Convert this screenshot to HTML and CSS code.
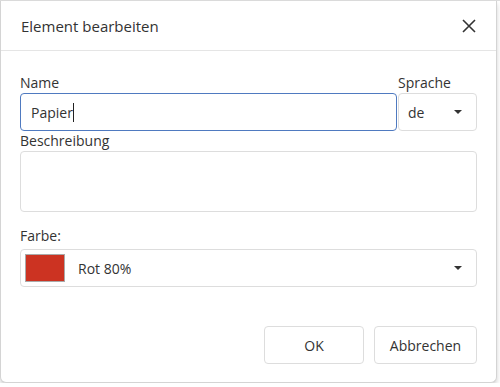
FILE: index.html
```html
<!DOCTYPE html>
<html lang="de">
<head>
<meta charset="utf-8">
<link rel="stylesheet" href="styles.css">
</head>
<body>
<div class="backdrop-line"></div>
<div class="dialog">
  <div class="dialog-header">
    <span class="dialog-title">Element bearbeiten</span>
    <svg class="close-icon" width="14" height="14" viewBox="0 0 14 14"><path d="M1 1 L13 13 M13 1 L1 13" stroke="#333" stroke-width="1.6" fill="none"/></svg>
  </div>
  <div class="dialog-body">
    <div class="name-row">
      <div class="field name-field">
        <div class="label">Name</div>
        <div class="control control-focus"><span>Papier</span><span class="caret"></span></div>
      </div>
      <div class="field lang-field">
        <div class="label">Sprache</div>
        <div class="control select"><span>de</span><span class="arrow"></span></div>
      </div>
    </div>
    <div class="field">
      <div class="label">Beschreibung</div>
      <div class="control textarea"></div>
    </div>
    <div class="field color-field">
      <div class="label">Farbe:</div>
      <div class="control select color-select">
        <span class="swatch"></span><span class="color-name">Rot 80%</span><span class="arrow"></span>
      </div>
    </div>
  </div>
  <div class="dialog-footer">
    <button class="btn btn-ok">OK</button>
    <button class="btn btn-cancel">Abbrechen</button>
  </div>
</div>
</body>
</html>
```
FILE: styles.css
```css
* { box-sizing: border-box; }
body {
  margin: 0;
  background: #fff;
  font-family: "Open Sans", "Noto Sans", sans-serif;
  font-size: 14px;
  color: #333;
}
.backdrop-line {
  height: 1px;
  background: #ddd;
}
.dialog {
  width: 497px;
  height: 382px;
  background: #fff;
  border: 1px solid #d4d4d4;
  border-top: none;
  border-radius: 0 0 6px 6px;
  box-shadow: 0 3px 5px rgba(0,0,0,0.18);
  display: flex;
  flex-direction: column;
}
.dialog-header {
  height: 50px;
  flex-shrink: 0;
  border-bottom: 1px solid #e5e5e5;
  display: flex;
  align-items: center;
  justify-content: space-between;
  padding: 0 20px 0 20px;
}
.dialog-title {
  font-size: 15px;
  color: #333;
}
.close-icon { margin-top: 1px; }
.dialog-body {
  padding: 22px 19px 0 19px;
  display: flex;
  flex-direction: column;
}
.name-row {
  display: grid;
  grid-template-columns: 1fr 79px;
  gap: 1px;
}
.label {
  height: 20px;
  line-height: 20px;
}
.control {
  height: 38px;
  border: 1px solid #ddd;
  border-radius: 4px;
  display: flex;
  align-items: center;
  padding: 0 10px;
  color: #333;
}
.control-focus {
  border-color: #4f7ac0;
}
.caret {
  width: 1px;
  height: 19px;
  background: #222;
}
.select {
  justify-content: space-between;
  padding: 0 14px 0 9px;
}
.arrow {
  width: 0;
  height: 0;
  border-left: 4px solid transparent;
  border-right: 4px solid transparent;
  border-top: 4px solid #333;
}
.textarea {
  height: 61px;
}
.color-field {
  margin-top: 14px;
}
.color-field .label { margin-bottom: 3px; }
.color-select {
  padding-left: 4px;
  justify-content: flex-start;
}
.swatch {
  width: 40px;
  height: 28px;
  background: #cc3322;
  border: 1px solid #aaa;
}
.color-name {
  margin-left: 13px;
  flex: 1;
}
.dialog-footer {
  margin-top: auto;
  padding: 0 19px 18px 0;
  display: flex;
  justify-content: flex-end;
  gap: 10px;
}
.btn {
  height: 38px;
  width: 100px;
  padding: 0;
  background: #fff;
  border: 1px solid #ddd;
  border-radius: 4px;
  font-family: "Open Sans", "Noto Sans", sans-serif;
  font-size: 14px;
  color: #333;
}
.btn-cancel {
  width: 103px;
}
```
